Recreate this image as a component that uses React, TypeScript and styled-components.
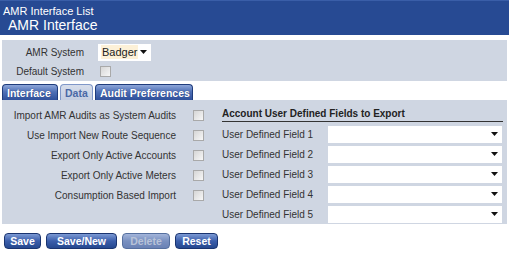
import React from 'react'
import styled, { createGlobalStyle } from 'styled-components'

const GlobalStyle = createGlobalStyle`
  body {
    margin: 0;
    background: #fff;
    font-family: 'Liberation Sans', Arial, sans-serif;
    font-size: 10px;
    color: #333;
  }
`

const OPTIONS = [
  'Import AMR Audits as System Audits',
  'Use Import New Route Sequence',
  'Export Only Active Accounts',
  'Export Only Active Meters',
  'Consumption Based Import',
]

const FIELDS = [1, 2, 3, 4, 5].map((n) => `User Defined Field ${n}`)

const Caret = () => (
  <svg width='7' height='4' viewBox='0 0 7 4'>
    <path d='M0 0h7L3.5 4z' fill='#111' />
  </svg>
)

const App = () => {
  return (
    <Page>
      <GlobalStyle />
      <Header>
        <div className='crumb'>AMR Interface List</div>
        <h1>AMR Interface</h1>
      </Header>
      <TopPanel>
        <FormRow>
          <Label>AMR System</Label>
          <Dropdown $width={53} $highlight>
            <span>Badger</span>
            <Caret />
          </Dropdown>
        </FormRow>
        <FormRow>
          <Label>Default System</Label>
          <Check />
        </FormRow>
      </TopPanel>
      <Tabs>
        <Tab $width={56}>Interface</Tab>
        <Tab $width={33} $active>
          Data
        </Tab>
        <Tab $width={98}>Audit Preferences</Tab>
      </Tabs>
      <TabBody>
        <OptionList>
          {OPTIONS.map((o) => (
            <OptionRow key={o}>
              <span>{o}</span>
              <Check />
            </OptionRow>
          ))}
        </OptionList>
        <FieldList>
          <FieldTitle>Account User Defined Fields to Export</FieldTitle>
          {FIELDS.map((f) => (
            <FieldRow key={f}>
              <span>{f}</span>
              <Dropdown $width={174}>
                <span />
                <Caret />
              </Dropdown>
            </FieldRow>
          ))}
        </FieldList>
      </TabBody>
      <Buttons>
        <Button $width={37}>Save</Button>
        <Button $width={71}>Save/New</Button>
        <Button $width={48} disabled>
          Delete
        </Button>
        <Button $width={43}>Reset</Button>
      </Buttons>
    </Page>
  )
}

const Page = styled.div`
  width: 509px;
`

const Header = styled.div`
  background: #274a93;
  border-top: 1px solid #3a5ea8;
  height: 35px;
  box-sizing: border-box;
  color: #fff;
  padding: 4px 0 0 3px;
  .crumb {
    font-size: 11px;
    line-height: 12px;
  }
  h1 {
    margin: 0;
    padding-left: 5px;
    font-size: 14px;
    font-weight: normal;
    line-height: 16px;
  }
`

const TopPanel = styled.div`
  margin: 5px 2px 0 2px;
  background: #cfd6e2;
  padding: 2px 0 0;
`

const FormRow = styled.div`
  display: grid;
  grid-template-columns: 82px 1fr;
  column-gap: 14px;
  align-items: center;
  height: 19px;
  &:first-child {
    height: 20px;
  }
`

const Label = styled.span`
  text-align: right;
  white-space: nowrap;
`

const Dropdown = styled.div<{ $width: number; $highlight?: boolean }>`
  width: ${(p) => p.$width}px;
  height: 17px;
  box-sizing: border-box;
  background: #fff;
  display: flex;
  align-items: center;
  justify-content: space-between;
  padding: 0 4px 0 3px;
  font-size: 11px;
  color: #222;
  span {
    background: ${(p) => (p.$highlight ? '#fdf1d8' : 'transparent')};
    padding: 0 1px;
    line-height: 14px;
  }
`

const Check = styled.span`
  display: inline-block;
  width: 11px;
  height: 11px;
  box-sizing: border-box;
  border: 1px solid #a9a9a9;
  background: linear-gradient(135deg, #d6d6d6, #f7f7f7);
  margin-left: 2px;
`

const Tabs = styled.div`
  display: flex;
  gap: 2px;
  margin: 3px 0 0 2px;
  height: 16px;
`

const Tab = styled.div<{ $width: number; $active?: boolean }>`
  width: ${(p) => p.$width}px;
  box-sizing: border-box;
  padding-left: 4px;
  white-space: nowrap;
  border-radius: 4px 4px 0 0;
  border: 1px solid ${(p) => (p.$active ? '#7f97c8' : '#1f3c7c')};
  border-bottom: none;
  font-weight: bold;
  font-size: 10.5px;
  line-height: 16px;
  color: ${(p) => (p.$active ? '#4a68a6' : '#fff')};
  text-shadow: ${(p) => (p.$active ? 'none' : '0 0 1px #1c3570')};
  background: ${(p) =>
    p.$active
      ? 'linear-gradient(#d7deeb, #c3cde1)'
      : 'linear-gradient(#8da6d9, #4f70b6 45%, #2f509b)'};
`

const TabBody = styled.div`
  margin: 0 2px;
  background: #cfd6e2;
  display: flex;
  padding-top: 5px;
  height: 124px;
  box-sizing: border-box;
`

const OptionList = styled.div`
  display: flex;
  flex-direction: column;
  width: 203px;
`

const OptionRow = styled.div`
  display: grid;
  grid-template-columns: 174px 1fr;
  column-gap: 15px;
  align-items: center;
  height: 20px;
  span:first-child {
    text-align: right;
    white-space: nowrap;
  }
`

const FieldList = styled.div`
  display: flex;
  flex-direction: column;
  margin-left: 17px;
  width: 281px;
`

const FieldTitle = styled.div`
  font-weight: bold;
  color: #222;
  height: 17px;
  box-sizing: border-box;
  line-height: 18px;
  border-bottom: 1px solid #333;
  margin-bottom: 2px;
  white-space: nowrap;
`

const FieldRow = styled.div`
  display: grid;
  grid-template-columns: 106px 174px;
  align-items: center;
  height: 20px;
  white-space: nowrap;
`

const Buttons = styled.div`
  display: flex;
  gap: 5px;
  margin: 9px 0 0 4px;
`

const Button = styled.button<{ $width: number }>`
  font-family: 'Liberation Sans', Arial, sans-serif;
  font-weight: bold;
  font-size: 10.5px;
  height: 16px;
  width: ${(p) => p.$width}px;
  padding: 0;
  border-radius: 4px;
  border: 1px solid #1a3470;
  color: #fff;
  background: linear-gradient(#7c9ad4, #3b5eab 50%, #25488f);
  &:disabled {
    color: #b8c3d8;
    border-color: #56709f;
    background: linear-gradient(#a3b5da, #7990c0 50%, #6a82b5);
  }
`

export default App
